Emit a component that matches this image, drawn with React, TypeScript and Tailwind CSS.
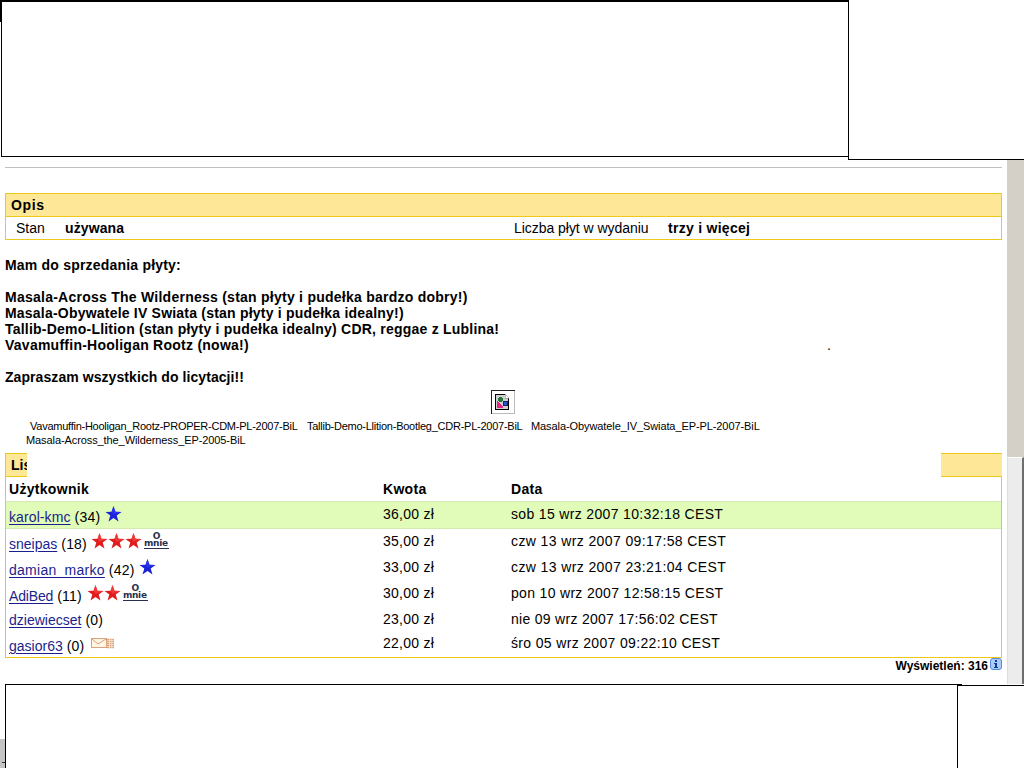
import type { ReactNode } from "react";

const STAR = "M8 0 L10 5.8 L16 5.9 L11.2 9.4 L13 15.5 L8 12 L3 15.5 L4.8 9.4 L0 5.9 L6 5.8 Z";

function Star({ color }: { color: "blue" | "red" }) {
  return (
    <svg viewBox="0 0 16 16" className="h-4 w-[17px] shrink-0">
      <path d={STAR} fill={color === "blue" ? "#1c22d8" : "#e01c1c"} />
      <path d="M8 0 L10 5.8 L16 5.9 L8 8.8 L6 5.8 Z" fill={color === "blue" ? "#3038f4" : "#f84444"} opacity="0.7" />
    </svg>
  );
}

function AboutMe() {
  return (
    <span className="ml-[2px] flex w-[25px] flex-col items-center font-['DejaVu_Sans'] text-[9px] leading-[7px] font-bold text-[#29304e]">
      <span>O</span>
      <span className="h-[9px] w-[25px] border-b border-[#29304e] tracking-[-0.3px]">mnie</span>
    </span>
  );
}

function Mail() {
  return (
    <svg viewBox="0 0 23 11" className="h-[11px] w-[23px]" fill="none" stroke="#d9a47c">
      <rect x="0.5" y="0.5" width="15" height="9" fill="#fff3e5" />
      <path d="M1 1 L7 6 L15 1" />
      <path d="M16 1.5H23M16 3.5H23M16 5.5H23M16 7.5H23M16 9.5H23" strokeWidth="1.3" strokeDasharray="2 .6" />
    </svg>
  );
}

function Info() {
  return (
    <svg viewBox="0 0 12 12" className="h-3 w-3">
      <rect x="0.5" y="0.5" width="11" height="11" rx="2.5" fill="#a9cdfa" stroke="#5b88d4" />
      <path d="M5 2h2v2H5zM4 5h3v4h1v1H4V9h1V6H4z" fill="#143a94" />
    </svg>
  );
}

function Broken() {
  return (
    <svg viewBox="0 0 24 24" className="h-6 w-6" shapeRendering="crispEdges">
      <path d="M0 0h24v1H1v23H0z" fill="#222" />
      <path d="M23 1v22H1v1h23V1z" fill="#bbb" />
      <path d="M4.500 4.500h10l3 3v12h-13z" fill="#d0d0d0" stroke="#000" />
      <path d="M14 4v4h4z" fill="#fff" stroke="#777" strokeWidth=".5" />
      <path d="M8 7h3v1h1v3h-1v1H8v-1H7V8h1z" fill="#257339" />
      <path d="M6 11l6 6v1H6z" fill="#e52586" />
      <rect x="12" y="11" width="4" height="4" fill="#3154ca" stroke="#082180" />
    </svg>
  );
}

type Row = {
  name: string;
  count: string;
  price: string;
  date: string;
  height: string;
  nameTop: string;
  nameSpace: string;
  dateSpace: string;
  cellTop: string;
  icons?: ReactNode;
};

const rows: Row[] = [
  { name: "karol-kmc", count: "(34)", price: "36,00 zł", date: "sob 15 wrz 2007 10:32:18 CEST", height: "h-7 border-y border-[#d3eab0] bg-[#e0fcb8]", nameTop: "pt-[6px]", nameSpace: "tracking-[0.1px]", dateSpace: "tracking-[0.34px]", cellTop: "pt-[3px]", icons: <div className="-mt-[2px] pl-[1px]"><Star color="blue" /></div> },
  { name: "sneipas", count: "(18)", price: "35,00 zł", date: "czw 13 wrz 2007 09:17:58 CEST", height: "h-[26px]", nameTop: "pt-[6px]", nameSpace: "", dateSpace: "tracking-[0.39px]", cellTop: "pt-[3px]", icons: <div className="-mt-[2px] flex"><Star color="red" /><Star color="red" /><Star color="red" /><AboutMe /></div> },
  { name: "damian_marko", count: "(42)", price: "33,00 zł", date: "czw 13 wrz 2007 23:21:04 CEST", height: "h-[26px]", nameTop: "pt-[6px]", nameSpace: "tracking-[0.27px]", dateSpace: "tracking-[0.39px]", cellTop: "pt-[3px]", icons: <div className="-mt-[2px]"><Star color="blue" /></div> },
  { name: "AdiBed", count: "(11)", price: "30,00 zł", date: "pon 10 wrz 2007 12:58:15 CEST", height: "h-[26px]", nameTop: "pt-[6px]", nameSpace: "tracking-[-0.15px]", dateSpace: "tracking-[0.32px]", cellTop: "pt-[3px]", icons: <div className="-mt-[2px] flex pl-[1px]"><Star color="red" /><Star color="red" /><AboutMe /></div> },
  { name: "dziewiecset", count: "(0)", price: "23,00 zł", date: "nie 09 wrz 2007 17:56:02 CEST", height: "h-[25px]", nameTop: "pt-[4px]", nameSpace: "", dateSpace: "tracking-[0.29px]", cellTop: "pt-[3px]" },
  { name: "gasior63", count: "(0)", price: "22,00 zł", date: "śro 05 wrz 2007 09:22:10 CEST", height: "h-[25px]", nameTop: "pt-[5px]", nameSpace: "", dateSpace: "tracking-[0.34px]", cellTop: "pt-[2px]", icons: <div className="mt-[1px] pl-[3px]"><Mail /></div> },
];

function TopFrames() {
  return (
    <div className="flex h-40">
      <div className="w-[1px] border-t-[22px] border-black" />
      <div className="h-[157px] w-[847px] border-t-2 border-b border-l border-black" />
      <div className="h-40 flex-1 border-b border-l border-black" />
    </div>
  );
}

function Description() {
  return (
    <>
      <section className="mt-[25px] h-[47px] border border-[#ecc91c]">
        <h2 className="h-[23px] border-b border-[#ecc91c] bg-[#fee796] pl-[5px] text-[14px] leading-[23px] font-bold tracking-[0.6px]">Opis</h2>
        <div className="flex h-[22px] leading-[23px]">
          <span className="w-[49px] pl-[10px]">Stan</span>
          <b className="ml-[10px] w-[449px] tracking-[0.1px]">używana</b>
          <span className="w-[154px] tracking-[-0.04px]">Liczba płyt w wydaniu</span>
          <b className="tracking-[0.28px]">trzy i więcej</b>
        </div>
      </section>
      <div className="mt-[17px] text-[14px] leading-4 font-bold whitespace-nowrap">
        <p className="mb-4 tracking-[0.2px]">Mam do sprzedania płyty:</p>
        <p className="tracking-[0.25px]">Masala-Across The Wilderness (stan płyty i pudełka bardzo dobry!)</p>
        <p className="tracking-[0.21px]">Masala-Obywatele IV Swiata (stan płyty i pudełka idealny!)</p>
        <p className="tracking-[0.22px]">Tallib-Demo-Llition (stan płyty i pudełka idealny) CDR, reggae z Lublina!</p>
        <div className="flex"><p className="w-[822px] tracking-[0.25px]">Vavamuffin-Hooligan Rootz (nowa!)</p><span className="font-normal">.</span></div>
        <p className="mt-4 tracking-[0.07px]">Zapraszam wszystkich do licytacji!!</p>
      </div>
      <div className="mt-[5px] ml-[486px]"><Broken /></div>
      <div className="mt-[5px] h-[34px] pl-[21px] text-[11px] leading-[14px] tracking-[-0.09px] whitespace-nowrap">
        <p className="flex pl-1">
          <span className="w-[277px] tracking-[-0.25px]">Vavamuffin-Hooligan_Rootz-PROPER-CDM-PL-2007-BiL</span>
          <span className="w-[224px] tracking-[-0.25px]">Tallib-Demo-Llition-Bootleg_CDR-PL-2007-BiL</span>
          <span>Masala-Obywatele_IV_Swiata_EP-PL-2007-BiL</span>
        </p>
        <p>Masala-Across_the_Wilderness_EP-2005-BiL</p>
      </div>
    </>
  );
}

function Bids() {
  return (
    <section>
      <div className="flex h-6 justify-between">
        <h2 className="w-[22px] overflow-hidden border-y border-l border-[#ecc91c] bg-[#fee796] pl-[5px] text-[14px] leading-[22px] font-bold">Lista</h2>
        <div className="w-[61px] border-y border-[#ecc91c] bg-[#fee796]" />
      </div>
      <div className="h-[181px] border-x border-b border-[#ecc91c]">
        <div className="grid h-6 grid-cols-[374px_128px_1fr] pl-[3px] leading-6 font-bold tracking-[0.3px]">
          <span>Użytkownik</span><span>Kwota</span><span>Data</span>
        </div>
        {rows.map((row) => (
          <div key={row.name} className={`grid grid-cols-[374px_128px_1fr] pl-[3px] leading-[18px] whitespace-nowrap ${row.height}`}>
            <div className={`flex ${row.nameTop}`}>
              <a className={`text-[#1b1f8c] underline underline-offset-2 ${row.nameSpace}`}>{row.name}</a>
              <span className="mr-1 ml-1 tracking-[0.2px]">{row.count}</span>
              {row.icons}
            </div>
            <span className={`tracking-[0.25px] ${row.cellTop}`}>{row.price}</span>
            <span className={`${row.dateSpace} ${row.cellTop}`}>{row.date}</span>
          </div>
        ))}
      </div>
      <div className="flex h-4 justify-end text-[12px] leading-4 font-bold"><span>Wyświetleń: 316</span><span className="ml-[2px]"><Info /></span></div>
    </section>
  );
}

export default function App() {
  return (
    <div className="flex h-[768px] w-[1024px] flex-col overflow-hidden bg-white font-['Liberation_Sans',Arial,sans-serif] text-[14px] text-black">
      <TopFrames />
      <div className="flex h-[524px]">
        <main className="ml-[5px] w-[997px] pt-[7px]">
          <div className="h-px bg-[#c0c0c0]" />
          <Description />
          <Bids />
        </main>
        <aside className="ml-[5px] flex w-[17px] flex-col bg-[#d4d0c8]">
          <div className="h-[297px]" />
          <div className="flex-1 border-t border-r-2 border-l border-t-white border-r-[#6e6e6e] border-l-[#ddd] bg-[#ececec]" />
        </aside>
      </div>
      <div className="flex h-[84px]">
        <div className="mt-[55px] w-[5px] bg-[#c4c4c4] pt-[23px] pl-[2px]"><div className="h-px bg-[#333]" /></div>
        <div className="w-[952px] border-t border-l border-black" />
        <div className="flex-1">
          <div className="h-px w-[5px] bg-black" />
          <div className="h-[83px] border-t border-l border-black" />
        </div>
      </div>
    </div>
  );
}
